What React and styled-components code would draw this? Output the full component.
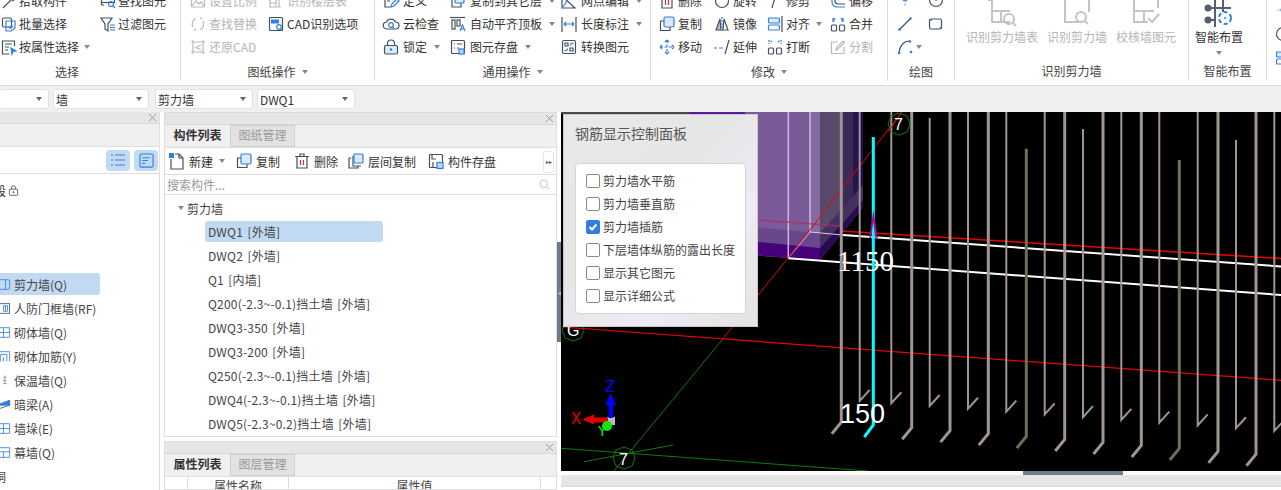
import React from "react";
import styled, { createGlobalStyle } from "styled-components";

const Global = createGlobalStyle`
  html, body { margin: 0; padding: 0; background: #fff; overflow: hidden; }
  body { font-family: "Noto Sans CJK SC", "Liberation Sans", sans-serif; font-size: 12px; color: #333; }
  #root { width: 1281px; height: 490px; overflow: hidden; }
`;

const BLUE = "#2f7fe6";
const DARK = "#46505c";
const ICONS = {
  pick: <><path d="M2 15 12 5" stroke={DARK}/><path d="M10 2l4 4-2 2-4-4z" stroke={BLUE}/></>,
  batch: <><rect x="1.500" y="2" width="9" height="9" rx="1.500" stroke={DARK}/><path d="M5 5h9v7l-4 3H5z" stroke={BLUE}/><path d="M8 11l1.500 1.500L12 10" stroke={BLUE}/></>,
  attr: <><path d="M13.500 7V2h-12v13h7" stroke={DARK}/><path d="M4 5h7M4 8h4M4 11h3" stroke={DARK}/><path d="M10 9l5 3-3 .5L11 15z" fill={BLUE} stroke={BLUE}/></>,
  find: <><rect x="1.500" y="1.500" width="13" height="8" stroke={DARK}/><path d="M4 12H1.500v-3" stroke={DARK}/><circle cx="11" cy="11" r="2.500" stroke={BLUE}/><path d="M13 13l2 2" stroke={BLUE}/></>,
  filter: <><path d="M1 2h11L8 8v7l-3-2V8z" stroke={DARK}/><path d="M10 9h5M10 11.500h5M10 14h5" stroke={BLUE}/></>,
  scale: <><rect x="1.500" y="3" width="13" height="11" rx="1"/><path d="M2 13l4-5 3 3 2-2 3 4"/></>,
  floors: <><path d="M2 14V6h6v8zM2 10h6M11 3v11M9 3h4M9 14h4"/></>,
  replace: <><path d="M3 11A6 6 0 0 1 6 2.500M13 5a6 6 0 0 1-3 8.500"/><path d="M10 1.500 12 3M6 14.500 4 13"/></>,
  cadopt: <><rect x="1.500" y="1.500" width="13" height="13" rx="1" stroke={DARK}/><rect x="3" y="3.500" width="8" height="4" fill={BLUE} stroke="none"/><circle cx="11" cy="11" r="2.300" stroke={BLUE}/><path d="M12.500 12.800l2 2" stroke={BLUE}/></>,
  restore: <><path d="M3 1v14M13 1v14M1 3h14M1 13h14"/><path d="M11 6 6 8.500l5 2.500"/></>,
  define: <><path d="M12 6V2H2v12h5" stroke={DARK}/><path d="M4 5h5M4 8h3" stroke={DARK}/><path d="M8 14l1-3 5-5 2 2-5 5z" stroke={BLUE}/></>,
  cloud: <><path d="M4 13a3.500 3.500 0 0 1-.5-7A5 5 0 0 1 12.500 6a3.500 3.500 0 0 1 0 7z" stroke={DARK}/><circle cx="8" cy="9" r="2.300" stroke={BLUE}/><path d="M9.700 10.800l1.500 1.500" stroke={BLUE}/></>,
  lock: <><rect x="1.500" y="6.500" width="13" height="8.500" rx="1.500" fill="#dbe9fa" stroke={DARK}/><path d="M4.500 6.500V4.500a3.500 3.500 0 0 1 7 0v2" stroke={DARK}/><circle cx="8" cy="10.500" r="1.200" fill={BLUE} stroke="none"/></>,
  copylayer: <><rect x="5" y="1" width="9" height="9" rx="1" fill="#dbe9fa" stroke={BLUE}/><path d="M5 5H2v9h9v-4" stroke={DARK}/></>,
  align: <><path d="M0 1.500h15" stroke={DARK}/><rect x="2" y="4" width="3" height="9" stroke={DARK}/><rect x="7" y="4" width="3" height="6" stroke={DARK}/><path d="M10 15l2.500-6 2.500 6M11 13h3" stroke={BLUE}/></>,
  save: <><rect x="1.500" y="1.500" width="13" height="13" rx="1" stroke={DARK}/><path d="M4 5h1M7 5h5M4 9h1M7 9h2" stroke={DARK}/><rect x="9" y="10" width="5" height="5" fill="#bcd7f6" stroke={BLUE}/></>,
  node: <><path d="M1 15V3l13 12z" stroke={DARK}/><path d="M2 14l8-12" stroke={BLUE}/></>,
  dim: <><path d="M1 1v15M15 1v15" stroke={DARK}/><path d="M3 8h10M3 8l2-2M3 8l2 2M13 8l-2-2M13 8l-2 2" stroke={BLUE}/></>,
  convert: <><rect x="1.500" y="1.500" width="13" height="13" rx="1.500" stroke={DARK}/><path d="M4 4h3v3H4zM9 12h3V9H9z" stroke={DARK}/><path d="M9.500 6.500a2 2 0 0 1 3-2M6.500 9.500a2 2 0 0 1-3 2" stroke={BLUE}/></>,
  del: <><path d="M3 4v11h10V4M1 3.500h14M6 3V1h4v2" stroke={DARK}/><path d="M6.500 7v5M9.500 7v5" stroke="#d9302c"/></>,
  copy: <><path d="M5 5H1.500v9.500H11V11" stroke={DARK}/><rect x="5" y="1" width="10" height="10" rx="1.500" fill="#dbe9fa" stroke={BLUE}/></>,
  move: <><path d="M8 1v14M1 8h14M8 1 6 3M8 1l2 2M8 15l-2-2M8 15l2-2M1 8l2-2M1 8l2 2M15 8l-2-2M15 8l-2 2" stroke={BLUE} strokeDasharray="3 1.500"/></>,
  rotate: <><circle cx="8" cy="8" r="6.500" stroke={DARK}/></>,
  mirror: <><path d="M6 3 2 14h5z" fill="#b9c2cc" stroke={DARK}/><path d="M8 1v15" stroke={BLUE} strokeDasharray="2 1"/><path d="M10 3l4 11H9z" stroke={DARK}/></>,
  extend: <><path d="M0 9h3M5 9h4" stroke={BLUE}/><path d="M11 15l4-14" stroke={DARK}/></>,
  trim: <><path d="M0 3h6M9 3h6" stroke={BLUE}/><path d="M9 1 5 15" stroke={DARK}/></>,
  alignobj: <><rect x="1.500" y="2" width="11" height="5" rx="1" fill="#dbe9fa" stroke={BLUE}/><rect x="1.500" y="9" width="11" height="5" rx="1" stroke={BLUE}/><path d="M15 0v16" stroke={DARK}/></>,
  breakk: <><rect x="1.500" y="9" width="5" height="6" rx="1" stroke={DARK}/><rect x="9.500" y="9" width="5" height="6" rx="1" stroke={DARK}/><path d="M2 1v4M5 3l-2-2M14 1v4M11 3l2-2" stroke={BLUE} strokeDasharray="2 1"/></>,
  offset: <><path d="M2 1v8a5 5 0 0 0 5 5h8" stroke={BLUE}/><path d="M5 1v7a3 3 0 0 0 3 3h7" stroke={DARK}/></>,
  merge: <><rect x="1.500" y="9" width="5" height="6" rx="1" stroke={DARK}/><rect x="9.500" y="9" width="5" height="6" rx="1" stroke={DARK}/><path d="M3 2v4M5 2l-2 4M13 2v4M11 2l2 4" stroke={BLUE}/></>,
  split: <><path d="M14 8v6.500H1.500V3H8"/><path d="M6 11l1-3 6-6 1.500 1.500-6 6z"/></>,
  point: <><path d="M8 0v14M2 6h12" stroke="#bbb" strokeDasharray="3 2"/><circle cx="8" cy="6" r="2" stroke={BLUE}/></>,
  circle: <><circle cx="8" cy="7" r="6.500" stroke={DARK}/><circle cx="8" cy="7" r="1" fill={BLUE} stroke="none"/></>,
  line: <><path d="M2 14 14 2" stroke={DARK}/><circle cx="2.500" cy="13.500" r="1.300" fill={BLUE} stroke="none"/><circle cx="13.500" cy="2.500" r="1.300" fill={BLUE} stroke="none"/></>,
  rect: <><rect x="1.500" y="3" width="12" height="10" rx="1.500" stroke={DARK}/><circle cx="3" cy="4" r="1" fill={BLUE} stroke="none"/><circle cx="12.500" cy="12" r="1" fill={BLUE} stroke="none"/></>,
  arc: <><path d="M2 14C3 6 7 2 13 2" stroke={DARK}/><circle cx="2" cy="14" r="1.300" fill={BLUE} stroke="none"/><circle cx="13" cy="2.500" r="1.300" fill={BLUE} stroke="none"/><circle cx="14" cy="13" r="1.300" fill={BLUE} stroke="none"/></>,
  newdoc: <><path d="M2 6v10h12V5l-4-4H6M10 1v4h4" stroke={DARK}/><rect x="0" y="0" width="5" height="5" fill={BLUE} stroke="none"/></>,
  floorcopy: <><path d="M3 5H1v10h9v-2M5 3v10h8" stroke={DARK}/><rect x="6" y="1" width="9" height="9" rx="1" fill="#dbe9fa" stroke={BLUE}/></>,
  compsave: <><rect x="1.500" y="1.500" width="13" height="13" rx="1" stroke={DARK}/><path d="M4 1.500V6h4M5 14v-5" stroke={DARK}/><rect x="9" y="9.500" width="6" height="6" fill="#bcd7f6" stroke={BLUE}/></>,
  wall: <><rect x="-3" y="1" width="17" height="14" rx="2" stroke={BLUE}/><path d="M8 1v14" stroke={BLUE}/></>,
  door: <><rect x="-3" y="1" width="17" height="14" stroke={DARK}/><path d="M5 4h6v8H5zM8 4v8" stroke={BLUE}/></>,
  brick: <><path d="M-3 1h17v14H-3zM-3 8h17M5 1v14" stroke={BLUE}/></>,
  rebar: <><path d="M-3 15V1h17v14M1 15V5h9v10M5 15V9" stroke={BLUE}/></>,
  insul: <><path d="M7 1v14" stroke={DARK} strokeDasharray="2 1.500"/><path d="M4 4h6M4 8h6M4 12h6" stroke={DARK} strokeWidth=".6"/></>,
  beam: <><path d="M-4 9l18-7v7L-4 15z" fill="#fff" stroke={DARK}/><path d="M-4 9l18-7v7z" fill={BLUE} stroke={BLUE}/></>,
  curtain: <><path d="M-3 1h17v14H-3zM-3 7h17M5 7v8" stroke={BLUE}/></>,
};

const Glyph = styled.svg`
  flex: none;
  width: ${(p) => p.$size || 16}px;
  height: ${(p) => p.$size || 16}px;
  fill: none;
  stroke: ${(p) => (p.$off ? "#b9b9b9" : DARK)};
  stroke-width: 1.2;
  overflow: visible;
`;
const Icon = ({ name, off, size }) => (
  <Glyph viewBox="0 0 16 16" $size={size} $off={off}>
    {ICONS[name]}
  </Glyph>
);

const Caret = styled.i`
  flex: none;
  display: inline-block;
  width: 0;
  height: 0;
  margin-left: ${(p) => p.$ml ?? 6}px;
  border-left: 3.5px solid transparent;
  border-right: 3.5px solid transparent;
  border-top: 4px solid ${(p) => p.$c || "#888"};
`;

/* ------- ribbon ------- */
const Ribbon = styled.header`
  display: flex;
  height: 85px;
  overflow: hidden;
  background: #fff;
`;
const Group = styled.section`
  flex: none;
  width: ${(p) => p.$w}px;
  margin-left: ${(p) => p.$ml || 0}px;
  height: 81px;
  border-right: 1px solid #dcdcdc;
  display: flex;
  flex-direction: column;
  justify-content: flex-end;
  box-sizing: border-box;
  align-self: flex-start;
`;
const GroupBody = styled.div`
  display: flex;
  align-items: flex-end;
  padding-left: ${(p) => p.$pl || 0}px;
  gap: ${(p) => p.$gap || 0}px;
`;
const GroupLabel = styled.div`
  height: 22px;
  display: flex;
  align-items: center;
  justify-content: center;
  color: #444;
  line-height: 18px;
  padding-top: 1px;
  box-sizing: border-box;
`;
const Col = styled.div`
  flex: none;
  width: ${(p) => p.$w}px;
  display: flex;
  flex-direction: column;
  padding-bottom: 4px;
`;
const ToolRow = styled.div`
  height: 23px;
  display: flex;
  align-items: center;
  gap: ${(p) => p.$gap ?? 3}px;
  white-space: nowrap;
  color: ${(p) => (p.$off ? "#b5b5b5" : "#333")};
`;
const Tool = ({ icon, label, caret, off, gap }) => (
  <ToolRow $off={off} $gap={gap}>
    {icon && <Icon name={icon} off={off} />}
    {label && <span>{label}</span>}
    {caret && <Caret $ml={label ? 3 : 0} />}
  </ToolRow>
);
const LargeTool = styled.div`
  flex: none;
  width: ${(p) => p.$w}px;
  height: 60px;
  display: flex;
  flex-direction: column;
  align-items: center;
  white-space: nowrap;
  color: ${(p) => (p.$off ? "#b5b5b5" : "#333")};
  line-height: 18px;
`;
const LargeGlyph = styled.svg`
  flex: none;
  width: 32px;
  height: 28px;
  fill: none;
  stroke: ${(p) => (p.$off ? "#c4c4c4" : "#55606c")};
  stroke-width: 2;
  overflow: visible;
`;
const CaretSlot = styled.div`
  height: 14px;
  display: flex;
  align-items: center;
`;

/* ------- combo bar ------- */
const ComboBar = styled.div`
  height: 26px;
  border-top: 1px solid #dcdcdc;
  background: #f0f0f0;
  display: flex;
  align-items: center;
  gap: 4px;
`;
const Combo = styled.div`
  flex: none;
  width: ${(p) => p.$w}px;
  height: 20px;
  background: #fff;
  border: 1px solid #e2e2e2;
  border-left-width: ${(p) => (p.$cut ? 0 : 1)}px;
  border-radius: 3px;
  box-sizing: border-box;
  display: flex;
  align-items: center;
  justify-content: space-between;
  padding: 0 6px 0 2px;
  font-size: 12px;
  color: #333;
  margin-right: ${(p) => p.$mr || 0}px;
`;

/* ------- main ------- */
const Main = styled.main`
  height: 378px;
  display: flex;
  overflow: hidden;
  background: #fff;
`;
const LeftPanel = styled.div`
  flex: none;
  width: 160px;
  display: flex;
  flex-direction: column;
  border-right: 1px solid #dedede;
  box-sizing: border-box;
`;
const MidColumn = styled.div`
  flex: none;
  width: 393px;
  margin-left: 4px;
  display: flex;
  flex-direction: column;
  gap: 4px;
`;
const Pane = styled.div`
  flex: ${(p) => (p.$grow ? "1" : "none")};
  height: ${(p) => (p.$h ? p.$h + "px" : "auto")};
  border: 1px solid #dedede;
  display: flex;
  flex-direction: column;
  box-sizing: border-box;
  overflow: hidden;
`;
const PaneTitle = styled.div`
  flex: none;
  height: 11px;
  background: #e6e6e6;
  border-bottom: 1px solid #d8d8d8;
  display: flex;
  align-items: center;
  justify-content: flex-end;
  padding-right: 3px;
  color: #999;
`;
const CloseGlyph = styled.svg`
  width: 7px;
  height: 7px;
  stroke: #9a9a9a;
  stroke-width: 1;
`;
const Close = () => (
  <CloseGlyph viewBox="0 0 7 7">
    <path d="M0 0l7 7M7 0 0 7" />
  </CloseGlyph>
);
const TabStrip = styled.div`
  flex: none;
  height: 22px;
  background: #f0f0f0;
  display: flex;
  border-bottom: 1px solid #dedede;
`;
const Tab = styled.div`
  width: 65px;
  display: flex;
  align-items: center;
  justify-content: center;
  padding-bottom: 3px;
  font-weight: ${(p) => (p.$on ? 700 : 400)};
  color: ${(p) => (p.$on ? "#333" : "#999")};
  background: ${(p) => (p.$on ? "#f0f0f0" : "#e2e2e2")};
  border: ${(p) => (p.$on ? "0" : "1px solid #cfcfcf")};
  box-sizing: border-box;
`;
const ViewSwitch = styled.div`
  flex: none;
  height: 26px;
  display: flex;
  justify-content: flex-end;
  align-items: center;
  gap: 4px;
  padding-right: 1px;
  border-bottom: 1px solid #dcdcdc;
`;
const SwitchBtn = styled.div`
  width: 24px;
  height: 21px;
  border-radius: 4px;
  background: #c3daf3;
  display: flex;
  align-items: center;
  justify-content: center;
`;
const LockLine = styled.div`
  margin: 7px 0 0 -6px;
  height: 18px;
  display: flex;
  align-items: center;
  gap: 2px;
`;
const NavList = styled.div`
  margin-top: 73px;
  display: flex;
  flex-direction: column;
`;
const NavItem = styled.div`
  height: ${(p) => (p.$on ? 22 : 24)}px;
  margin: ${(p) => (p.$on ? "1px" : "0")} 0;
  width: 100px;
  display: flex;
  align-items: center;
  gap: 3px;
  white-space: nowrap;
  color: #444;
  background: ${(p) => (p.$on ? "#c2d9f2" : "transparent")};
  border-radius: 0 3px 3px 0;
`;
const NavStub = styled.div`
  height: 24px;
  margin-left: -6px;
  display: flex;
  align-items: center;
  color: #444;
`;
const CompBar = styled.div`
  flex: none;
  height: 26px;
  display: flex;
  align-items: center;
  padding-left: 4px;
  border-bottom: 1px solid #dedede;
  position: relative;
`;
const CompBtn = styled.div`
  flex: none;
  width: ${(p) => p.$w}px;
  display: flex;
  align-items: center;
  gap: 4px;
  white-space: nowrap;
  color: #333;
`;
const MoreBtn = styled.div`
  position: absolute;
  right: 2px;
  top: 3px;
  width: 9px;
  height: 20px;
  border: 1px solid #e4e4e4;
  border-radius: 3px;
  background: #fff;
  font-size: 6px;
  line-height: 20px;
  text-align: center;
  color: #555;
`;
const Search = styled.div`
  flex: none;
  height: 19px;
  display: flex;
  align-items: center;
  justify-content: space-between;
  padding: 0 6px 0 2px;
  color: #9a9a9a;
  border-bottom: 1px solid #e0e0e0;
`;
const Tree = styled.div`
  flex: 1;
  padding-top: 1px;
`;
const TreeHead = styled.div`
  height: 24px;
  padding-left: 13px;
  display: flex;
  align-items: center;
  gap: 3px;
  color: #444;
`;
const TreeItem = styled.div`
  height: ${(p) => (p.$on ? 21 : 24)}px;
  margin: ${(p) => (p.$on ? "1px 0 1px 40px" : "0 0 0 40px")};
  width: 178px;
  padding-left: 3px;
  box-sizing: border-box;
  display: flex;
  align-items: center;
  white-space: pre;
  letter-spacing: 0.2px;
  word-spacing: 1.5px;
  color: #444;
  border-radius: 3px;
  background: ${(p) => (p.$on ? "#c2d9f2" : "transparent")};
`;
const PropHead = styled.div`
  flex: none;
  display: grid;
  grid-template-columns: 22px 101px 252px 1fr;
  height: 20px;
  color: #444;
`;
const PropCell = styled.div`
  border-left: ${(p) => (p.$first ? 0 : "1px solid #dedede")};
  text-align: center;
  line-height: 17px;
`;

/* ------- viewport ------- */
const Splitter = styled.div`
  flex: none;
  width: 4px;
  position: relative;
`;
const SplitHandle = styled.div`
  position: absolute;
  left: 0;
  top: 130px;
  width: 4px;
  height: 100px;
  background: #6e7c8b;
  display: flex;
  align-items: center;
  justify-content: center;
  color: #cdd3da;
  font-size: 6px;
`;
const ViewColumn = styled.div`
  flex: 1;
  display: flex;
  flex-direction: column;
  min-width: 0;
`;
const Stage = styled.div`
  position: relative;
  flex: none;
  height: 359px;
  background: #000;
`;
const Canvas = styled.svg`
  display: block;
  width: 720px;
  height: 359px;
`;
const BottomSplit = styled.div`
  flex: none;
  height: 4px;
  padding-left: 462px;
  background: #fff;
`;
const BottomHandle = styled.div`
  width: 100px;
  height: 4px;
  background: #6e7c8b;
`;
const BottomBar = styled.div`
  flex: none;
  height: 11px;
  background: #e6e6e6;
  border-bottom: 1px solid #d8d8d8;
`;
const Float = styled.div`
  position: absolute;
  left: 2px;
  top: 2px;
  width: 195px;
  height: 213px;
  box-sizing: border-box;
  border: 1px solid #c9c9c9;
  background: linear-gradient(135deg, #e9e9e9 0%, #e6e6e6 40%, #f0eaf4 70%, #e4e2e4 100%);
  padding: 8px 11px;
`;
const FloatTitle = styled.div`
  font-size: 14px;
  line-height: 20px;
  color: #555;
`;
const CheckBox = styled.div`
  margin-top: 20px;
  height: 151px;
  box-sizing: border-box;
  width: 171px;
  background: #fff;
  border: 1px solid #d4d4d4;
  border-radius: 4px;
  padding: 5px 0 0 10px;
`;
const CheckRow = styled.div`
  height: 23px;
  display: flex;
  align-items: center;
  gap: 3px;
  color: #444;
  white-space: nowrap;
`;
const Tick = styled.span`
  flex: none;
  width: 14px;
  height: 14px;
  box-sizing: border-box;
  border-radius: 2px;
  border: 1px solid ${(p) => (p.$on ? "#2f7fe6" : "#8a8a8a")};
  background: ${(p) => (p.$on ? "#2f7fe6" : "#fff")};
  display: flex;
  align-items: center;
  justify-content: center;
`;
const TickMark = styled.svg`
  width: 10px;
  height: 10px;
  fill: none;
  stroke: #fff;
  stroke-width: 2;
`;

const GREY = "#a09590";
const OLIVE = "#6f6f58";
const thick = [841.3, 911.7, 950, 988.3, 1026.3, 1064.7, 1103, 1141.3, 1179.3, 1218, 1256];
const thin = [859.7, 891.3, 929.7, 968, 1006.3, 1044.7, 1083, 1121.3, 1159.3, 1197.7, 1236, 1274.3];
const thinTop = { 929.7: 118, 1083: 129, 1236: 140 };

const Rebars = () => (
  <g fill="none">
    {thick.map((x) => {
      const y = 427.7 + (x - 911.7) * 0.0772;
      const olive = x === 1026.3 || x === 1179.3;
      const top = x === 1026.3 ? 148.7 : x === 1179.3 ? 160 : 112;
      return (
        <polyline
          key={x}
          points={`${x},${top} ${x},${y} ${x - 9.5},${y + 11.5}`}
          stroke={olive ? OLIVE : GREY}
          strokeWidth="3"
        />
      );
    })}
    {thin.map((x) => {
      const y = 406 + (x - 929.7) * 0.0725;
      return (
        <polyline
          key={x}
          points={`${x},${thinTop[x] || 112} ${x},${y} ${x + 10},${y - 11}`}
          stroke={GREY}
          strokeWidth="2"
        />
      );
    })}
  </g>
);

const Scene = () => (
  <Canvas viewBox="561 112 720 359">
    <defs>
      <clipPath id="boxclip">
        <polygon points="690,112 863,112 863,208 820,260 788,258 690,250" />
      </clipPath>
    </defs>
    <rect x="561" y="112" width="132" height="2" fill="#4a4a4a" />
    <g clipPath="url(#boxclip)">
      <rect x="690" y="112" width="100" height="150" fill="#7a5a98" />
      <rect x="690" y="112" width="55" height="2" fill="#5a1a9a" />
      <rect x="788" y="112" width="22" height="150" fill="#7a5b98" />
      <rect x="810" y="112" width="10" height="150" fill="#836aa0" />
      <rect x="820" y="112" width="22" height="150" fill="#5a4a6a" />
      <rect x="842" y="112" width="11" height="150" fill="#3a2a55" />
      <rect x="853" y="112" width="7" height="150" fill="#28164a" />
      <rect x="860" y="112" width="3" height="150" fill="#200a55" />
      <polygon points="740,226 820,233 820,260 740,254" fill="#69478a" />
      <polygon points="820,233 863,185 863,208 820,260" fill="#45305f" />
      <polygon points="740,240 820,248 820,260 788,258 740,254" fill="#45007a" />
      <polygon points="820,248 850,215 863,200 863,208 820,260" fill="#2a0a55" />
    </g>
    <g fill="none" strokeWidth="1.500">
      <path d="M788.300 112v146M810 112v120" stroke="#cdb8e0" />
      <path d="M788.300 258 810 232 843 235" stroke="#d8c8e8" strokeWidth="1" />
    </g>
    <g fill="none" stroke="#e80000" strokeWidth="1.200">
      <path d="M841 231 1281 258.500" strokeWidth="1.600" />
      <path d="M758 220 841 226" stroke="#a8306a" />
      <path d="M562 327 1281 380.300" />
      <path d="M902 112 788 258 722 340" strokeWidth="1" />
    </g>
    <g fill="none" stroke="#ffffff" strokeWidth="2">
      <path d="M843 235 1281 266.500" />
      <path d="M788.300 258.300 1281 295" />
    </g>
    <Rebars />
    <g fill="none" stroke="#0e7a0e" strokeWidth="1">
      <path d="M722 340 614 471" />
      <path d="M561 448.300 868 471" />
      <path d="M584 461.700 673 445" />
      <polygon points="624,447 632,450 635,458 632,466 624,469 616,466 613,458 616,450" />
      <polygon points="899,113 907,116 910,124 907,132 899,135 891,132 888,124 891,116" />
      <polygon points="573,319 581,322 584,330 581,338 573,341 565,338 562,330 565,322" />
    </g>
    <path d="M902 112 888 132" stroke="#e80000" strokeWidth="1" />
    <polyline points="873.300,137 873.300,425 864.300,437" fill="none" stroke="#00ffff" strokeWidth="3" />
    <polygon points="873.300,210 869.300,238 871,238 873.300,222 875.500,238 877.700,238" fill="#a010a0" />
    <g fill="#fff">
      <text x="837" y="271" fontFamily="Liberation Serif, serif" fontSize="29">1150</text>
      <text x="840" y="423" fontFamily="Liberation Sans, sans-serif" fontSize="27">150</text>
      <text x="894" y="130" fontFamily="Liberation Sans, sans-serif" fontSize="16">7</text>
      <text x="619" y="465" fontFamily="Liberation Sans, sans-serif" fontSize="16">7</text>
      <text x="567" y="336" fontFamily="Liberation Sans, sans-serif" fontSize="16">G</text>
    </g>
    <rect x="607" y="417" width="8" height="8" fill="#bbb" />
    <rect x="608.500" y="405" width="4.500" height="13" fill="#0000ff" />
    <polygon points="610.700,393 605.500,405 616,405" fill="#0000ff" />
    <rect x="594" y="417.500" width="14" height="5" fill="#e00000" />
    <polygon points="582,419.500 594,414.500 594,424.500" fill="#e00000" />
    <circle cx="607" cy="426" r="5" fill="#12e612" />
    <text x="605" y="392" fontFamily="DejaVu Sans, sans-serif" fontSize="15" fill="#0000ff">Z</text>
    <text x="571" y="424" fontFamily="DejaVu Sans, sans-serif" fontSize="15" fill="#e00000">X</text>
    <text x="598" y="436" fontFamily="DejaVu Sans, sans-serif" fontSize="14" fill="#12e612">Y</text>
  </Canvas>
);

const C = ({ items, w, gap }) => (
  <Col $w={w}>
    {items.map((t, i) => (
      <Tool key={i} icon={t[0]} label={t[1]} caret={t[2]} off={t[3]} gap={gap} />
    ))}
  </Col>
);

const Large = ({ w, label, off, caret, children }) => (
  <LargeTool $w={w} $off={off}>
    <LargeGlyph viewBox="0 0 32 28" $off={off}>{children}</LargeGlyph>
    <span>{label}</span>
    {caret && <CaretSlot><Caret $ml={0} /></CaretSlot>}
  </LargeTool>
);

const TREE = ["DWQ1 [外墙]", "DWQ2 [外墙]", "Q1 [内墙]", "Q200(-2.3~-0.1)挡土墙 [外墙]", "DWQ3-350 [外墙]", "DWQ3-200 [外墙]", "Q250(-2.3~-0.1)挡土墙 [外墙]", "DWQ4(-2.3~-0.1)挡土墙 [外墙]", "DWQ5(-2.3~0.2)挡土墙 [外墙]"];
const NAV = [["wall", "剪力墙(Q)"], ["door", "人防门框墙(RF)"], ["brick", "砌体墙(Q)"], ["rebar", "砌体加筋(Y)"], ["insul", "保温墙(Q)"], ["beam", "暗梁(A)"], ["brick", "墙垛(E)"], ["curtain", "幕墙(Q)"]];
const CHECKS = [["剪力墙水平筋"], ["剪力墙垂直筋"], ["剪力墙插筋", true], ["下层墙体纵筋的露出长度"], ["显示其它图元"], ["显示详细公式"]];

export default function App() {
  return (
    <>
      <Global />
      <Ribbon>
        <Group $w={227} $ml={-46}>
          <GroupBody $pl={47}>
            <C w={99} gap={2} items={[["pick", "拾取构件"], ["batch", "批量选择"], ["attr", "按属性选择", true]]} />
            <C w={80} gap={2} items={[["find", "查找图元"], ["filter", "过滤图元"], []]} />
          </GroupBody>
          <GroupLabel>选择</GroupLabel>
        </Group>
        <Group $w={194}>
          <GroupBody $pl={9}>
            <C w={78} items={[["scale", "设置比例", false, true], ["replace", "查找替换", false, true], ["restore", "还原CAD", false, true]]} />
            <C w={100} items={[["floors", "识别楼层表", false, true], ["cadopt", "CAD识别选项"], []]} />
          </GroupBody>
          <GroupLabel>图纸操作<Caret /></GroupLabel>
        </Group>
        <Group $w={276}>
          <GroupBody $pl={8}>
            <C w={67} gap={4} items={[["define", "定义"], ["cloud", "云检查"], ["lock", "锁定", true]]} />
            <C w={111} gap={4} items={[["copylayer", "复制到其它层", true], ["align", "自动平齐顶板", true], ["save", "图元存盘", true]]} />
            <C w={88} gap={4} items={[["node", "网点编辑", true], ["dim", "长度标注", true], ["convert", "转换图元"]]} />
          </GroupBody>
          <GroupLabel>通用操作<Caret /></GroupLabel>
        </Group>
        <Group $w={237}>
          <GroupBody $pl={8}>
            <C w={55} items={[["del", "删除"], ["copy", "复制"], ["move", "移动"]]} />
            <C w={53} items={[["rotate", "旋转"], ["mirror", "镜像"], ["extend", "延伸"]]} />
            <C w={63} items={[["trim", "修剪"], ["alignobj", "对齐", true], ["breakk", "打断"]]} />
            <C w={50} items={[["offset", "偏移"], ["merge", "合并"], ["split", "分割", false, true]]} />
          </GroupBody>
          <GroupLabel>修改<Caret /></GroupLabel>
        </Group>
        <Group $w={67}>
          <GroupBody $pl={9}>
            <C w={31} items={[["point"], ["line"], ["arc", undefined, true]]} />
            <C w={20} items={[["circle"], ["rect"], []]} />
          </GroupBody>
          <GroupLabel>绘图</GroupLabel>
        </Group>
        <Group $w={234}>
          <GroupBody $pl={11} $gap={9}>
            <Large w={72} label="识别剪力墙表" off>
              <path d="M6 0v22h18M6 11h18M15 11v11M2 0h4" /><circle cx="23" cy="19" r="5" /><path d="M27 23l3 3" />
            </Large>
            <Large w={60} label="识别剪力墙" off>
              <path d="M4 0v22h14M28 0v12" /><circle cx="20" cy="17" r="5" /><path d="M24 21l3 3" />
            </Large>
            <Large w={60} label="校核墙图元" off>
              <path d="M4 0v22h14M4 11h20M14 11v11M28 0v8" /><path d="M18 18l4 4 7-8" />
            </Large>
          </GroupBody>
          <GroupLabel>识别剪力墙</GroupLabel>
        </Group>
        <Group $w={78}>
          <GroupBody $pl={6}>
            <Large w={48} label="智能布置" caret>
              <path d="M4 8h24M12 0v27M20 0v12M4 20h8" />
              <circle cx="5" cy="8" r="2.500" fill="#55606c" />
              <circle cx="5" cy="20" r="2.500" fill="#55606c" />
              <circle cx="22" cy="18" r="6" stroke={BLUE} strokeDasharray="4 2.500" />
              <circle cx="22" cy="18" r="1" fill={BLUE} stroke="none" />
            </Large>
          </GroupBody>
          <GroupLabel>智能布置</GroupLabel>
        </Group>
        <Group $w={40}>
          <GroupBody $pl={8}>
            <C w={20} items={[["point"], ["circle"], ["alignobj"]]} />
          </GroupBody>
          <GroupLabel />
        </Group>
      </Ribbon>

      <ComboBar>
        <Combo $w={49} $cut><span /><Caret $ml={0} $c="#666" /></Combo>
        <Combo $w={96} $mr={2}><span>墙</span><Caret $ml={0} $c="#666" /></Combo>
        <Combo $w={98}><span>剪力墙</span><Caret $ml={0} $c="#666" /></Combo>
        <Combo $w={98}><span>DWQ1</span><Caret $ml={0} $c="#666" /></Combo>
      </ComboBar>

      <Main>
        <LeftPanel>
          <PaneTitle><Close /></PaneTitle>
          <TabStrip />
          <ViewSwitch>
            <SwitchBtn><Glyph viewBox="0 0 16 16" $size={16}><path d="M1 3h2M1 8h2M1 13h2M5 3h10M5 8h10M5 13h10" stroke={BLUE} /></Glyph></SwitchBtn>
            <SwitchBtn><Glyph viewBox="0 0 16 16" $size={15}><rect x="1" y="1" width="14" height="14" rx="1.500" stroke={BLUE} /><path d="M3.500 5h8M3.500 8h6M3.500 11h3" stroke={BLUE} /></Glyph></SwitchBtn>
          </ViewSwitch>
          <LockLine>
            <span>段</span>
            <Glyph viewBox="0 0 16 16" $size={11}><rect x="2" y="6" width="12" height="9" rx="1" /><path d="M5 6V4a3 3 0 0 1 6 0v2" /><circle cx="8" cy="10.500" r="1" /></Glyph>
          </LockLine>
          <NavList>
            {NAV.map((n, i) => (
              <NavItem key={n[1]} $on={i === 0}>
                <Icon name={n[0]} size={11} />
                <span>{n[1]}</span>
              </NavItem>
            ))}
            <NavStub>洞</NavStub>
          </NavList>
        </LeftPanel>

        <MidColumn>
          <Pane $h={325}>
            <PaneTitle><Close /></PaneTitle>
            <TabStrip><Tab $on>构件列表</Tab><Tab>图纸管理</Tab></TabStrip>
            <CompBar>
              <CompBtn $w={67}><Icon name="newdoc" /><span>新建</span><Caret $ml={2} /></CompBtn>
              <CompBtn $w={58}><Icon name="copy" /><span>复制</span></CompBtn>
              <CompBtn $w={54}><Icon name="del" /><span>删除</span></CompBtn>
              <CompBtn $w={80}><Icon name="floorcopy" /><span>层间复制</span></CompBtn>
              <CompBtn $w={72}><Icon name="compsave" /><span>构件存盘</span></CompBtn>
              <MoreBtn>▸▸</MoreBtn>
            </CompBar>
            <Search>
              <span>搜索构件...</span>
              <Glyph viewBox="0 0 16 16" $size={11} $off><circle cx="7" cy="7" r="5.500" /><path d="M11 11l4 4" /></Glyph>
            </Search>
            <Tree>
              <TreeHead><Caret $ml={0} /><span>剪力墙</span></TreeHead>
              {TREE.map((t, i) => (
                <TreeItem key={t} $on={i === 0}>{t}</TreeItem>
              ))}
            </Tree>
          </Pane>
          <Pane $grow>
            <PaneTitle><Close /></PaneTitle>
            <TabStrip><Tab $on>属性列表</Tab><Tab>图层管理</Tab></TabStrip>
            <PropHead>
              <PropCell $first />
              <PropCell>属性名称</PropCell>
              <PropCell>属性值</PropCell>
              <PropCell />
            </PropHead>
          </Pane>
        </MidColumn>

        <Splitter><SplitHandle>◂</SplitHandle></Splitter>

        <ViewColumn>
          <Stage>
            <Scene />
            <Float>
              <FloatTitle>钢筋显示控制面板</FloatTitle>
              <CheckBox>
                {CHECKS.map(([label, on]) => (
                  <CheckRow key={label}>
                    <Tick $on={on}>
                      {on && <TickMark viewBox="0 0 10 10"><path d="M1.500 5l2.500 2.500 4.500-5" /></TickMark>}
                    </Tick>
                    <span>{label}</span>
                  </CheckRow>
                ))}
              </CheckBox>
            </Float>
          </Stage>
          <BottomSplit><BottomHandle /></BottomSplit>
          <BottomBar />
        </ViewColumn>
      </Main>
    </>
  );
}
